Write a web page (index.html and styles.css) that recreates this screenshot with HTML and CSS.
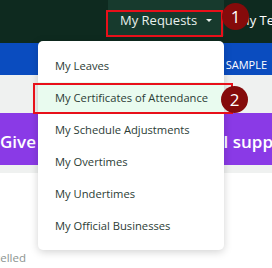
FILE: index.html
```html
<!DOCTYPE html>
<html>
<head>
  <meta charset="utf-8">
  <title>My Requests</title>
  <link rel="stylesheet" href="styles.css">
</head>
<body>
  <div class="page">
    <div class="topbar">
      <div class="nav-btn">
        My Requests <span class="caret"></span>
      </div>
      <div class="nav-item">My Team</div>
    </div>
    <div class="bluebar">
      <span class="sample">SAMPLE</span>
    </div>
    <div class="greyband"></div>
    <div class="banner">
      <span>Give</span>
      <span class="banner-right">l supp</span>
    </div>
    <div class="divider"></div>
    <div class="content">
      <div class="status">Cancelled</div>
    </div>

    <ul class="menu">
      <li>My Leaves</li>
      <li class="active">My Certificates of Attendance</li>
      <li>My Schedule Adjustments</li>
      <li>My Overtimes</li>
      <li>My Undertimes</li>
      <li>My Official Businesses</li>
    </ul>

    <div class="mark mark-btn"></div>
    <div class="mark mark-item"></div>
    <div class="badge badge-1">1</div>
    <div class="badge badge-2">2</div>
  </div>
</body>
</html>
```

FILE: styles.css
```css
* {
  margin: 0;
  padding: 0;
  box-sizing: border-box;
}
body {
  font-family: "Open Sans", "Noto Sans", sans-serif;
  background: #fff;
}
.page {
  width: 272px;
  height: 268px;
  position: relative;
  overflow: hidden;
}
.topbar {
  height: 43px;
  background: #0e2a1f;
  display: flex;
  align-items: flex-start;
  padding-left: 108px;
  white-space: nowrap;
  overflow: hidden;
}
.nav-btn {
  flex-shrink: 0;
  width: 116px;
  height: 36px;
  background: #173a2d;
  color: #e8f0ec;
  font-size: 13px;
  display: flex;
  align-items: center;
  padding: 4px 0 0 12px;
}
.caret {
  display: inline-block;
  margin-left: 9px;
  border-left: 3px solid transparent;
  border-right: 3px solid transparent;
  border-top: 3px solid #e8f0ec;
}
.nav-item {
  flex-shrink: 0;
  color: #fff;
  font-size: 13px;
  padding: 11px 0 0 14px;
}
.bluebar {
  height: 32px;
  background: #0a4cbf;
  display: flex;
  align-items: center;
  justify-content: flex-end;
  overflow: hidden;
}
.sample {
  color: #fff;
  font-size: 11px;
  margin-right: 5px;
  padding-top: 11px;
}
.greyband {
  height: 38px;
  background: #eff1f0;
}
.banner {
  height: 52px;
  background: #8a3ae6;
  color: #fff;
  font-size: 17px;
  font-weight: 600;
  display: flex;
  align-items: center;
  justify-content: space-between;
  padding-top: 4px;
  white-space: nowrap;
  overflow: hidden;
}
.banner-right {
  margin-right: -1px;
}
.divider {
  height: 8px;
  background: #eff1f0;
}
.content {
  padding-top: 77px;
  overflow: hidden;
}
.status {
  color: #8c9490;
  font-size: 11.5px;
  margin-left: -26px;
}
.menu {
  position: absolute;
  left: 38px;
  top: 41px;
  width: 186px;
  list-style: none;
  background: #fff;
  border-radius: 5px;
  box-shadow: 0 2px 8px rgba(0, 0, 0, 0.18);
  padding: 9px 0 8px;
}
.menu li {
  height: 32px;
  line-height: 32px;
  padding-left: 17px;
  font-size: 11.2px;
  color: #2b3c35;
  white-space: nowrap;
}
.menu li.active {
  background: #e9fbef;
}
.mark {
  position: absolute;
  border: 2px solid #e8101a;
}
.mark-btn {
  left: 106px;
  top: 10px;
  width: 117px;
  height: 27px;
}
.mark-item {
  left: 33px;
  top: 83px;
  width: 200px;
  height: 31px;
}
.badge {
  position: absolute;
  width: 27px;
  height: 27px;
  border-radius: 50%;
  background: #850b0b;
  color: #fff;
  font-size: 17px;
  line-height: 27px;
  text-align: center;
}
.badge-1 {
  left: 222px;
  top: 3px;
}
.badge-2 {
  left: 221px;
  top: 86px;
}
```
